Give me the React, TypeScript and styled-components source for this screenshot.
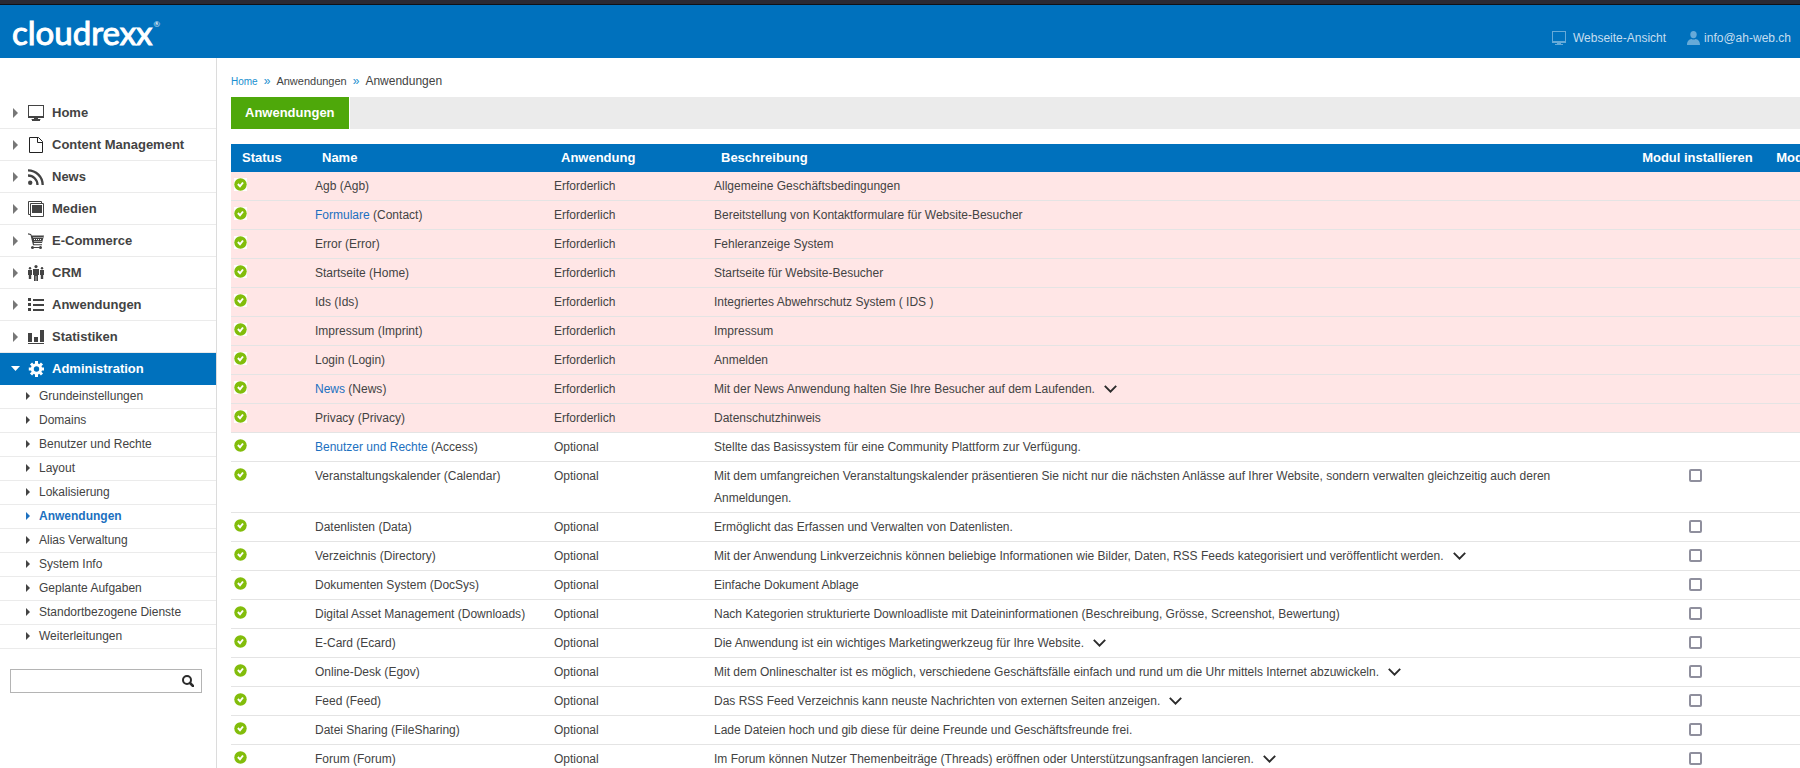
import React, { useState } from "react";
import styled, { createGlobalStyle, css } from "styled-components";

const blue = "#0071bd";
const linkBlue = "#1c70c0";
const ink = "#434343";
const line = "#e4e4e4";

const GlobalStyle = createGlobalStyle`
  * { box-sizing: border-box; }
  body {
    margin: 0;
    background: #fff;
    color: ${ink};
    font: 12px/22px "Liberation Sans", Arial, sans-serif;
  }
  a { color: inherit; text-decoration: none; }
  ul, ol { list-style: none; margin: 0; padding: 0; }
  svg { display: block; flex: none; }
`;

const Page = styled.div`
  display: flex;
  flex-direction: column;
  height: 100vh;
  overflow: hidden;
`;

const Header = styled.header`
  display: flex;
  flex: none;
  justify-content: space-between;
  height: 58px;
  padding: 0 9px 0 12px;
  border-top: 4px solid #2b2a33;
  background: ${blue};
  box-shadow: inset 0 1px #111116;
`;

const Logo = styled.a`
  display: flex;
  align-items: flex-start;
  gap: 1px;
  padding-top: 12px;
  color: #fff;
  font: 33px/32px Lato, sans-serif;
  -webkit-text-stroke: 1px #fff;
`;

const LogoMark = styled.sup`
  padding-top: 4px;
  font-size: 8px;
  line-height: 8px;
  -webkit-text-stroke: 0;
`;

const HeaderLinks = styled.nav`
  display: flex;
  align-items: flex-end;
  gap: 21px;
  padding-bottom: 9px;
`;

const HeaderLink = styled.a<{ $gap: number }>`
  display: flex;
  align-items: center;
  gap: ${(p) => p.$gap}px;
  color: #c5def0;
  svg { color: #66aad8; }
`;

const Body = styled.div`
  display: flex;
  flex: 1;
  min-height: 0;
`;

const Sidebar = styled.aside`
  flex: none;
  width: 217px;
  padding-top: 39px;
  border-right: 1px solid #dcdcdc;
`;

const NavLink = styled.a<{ $active?: boolean }>`
  display: flex;
  align-items: center;
  gap: 8px;
  height: 32px;
  padding-left: 11px;
  border-bottom: 1px solid #ebebeb;
  font-size: 13px;
  font-weight: bold;
  ${(p) => p.$active && css`
    border-color: ${blue};
    background: ${blue};
    color: #fff;
  `}
`;

const SubLink = styled.a<{ $active?: boolean }>`
  display: flex;
  align-items: center;
  gap: 9px;
  height: 24px;
  padding: 0 0 2px 26px;
  border-bottom: 1px solid #ebebeb;
  ${(p) => p.$active && css`
    color: ${linkBlue};
    font-weight: bold;
  `}
`;

const Search = styled.form`
  display: flex;
  height: 24px;
  margin: 20px 14px 0 10px;
  border: 1px solid #b4b4b4;
`;

const SearchInput = styled.input`
  flex: 1;
  min-width: 0;
  padding: 0 6px;
  border: 0;
  outline: 0;
  background: none;
  color: ${ink};
  font: inherit;
`;

const PlainButton = styled.button`
  padding: 0;
  border: 0;
  background: none;
  color: #2b2b2b;
  cursor: pointer;
`;

const SearchButton = styled(PlainButton)`
  padding: 0 7px;
`;

const Main = styled.main`
  flex: 1;
  min-width: 0;
  padding-left: 14px;
  overflow: hidden;
`;

const Crumbs = styled.ol`
  display: flex;
  align-items: baseline;
  gap: 6px;
  padding: 12px 0 4px;
`;

const Crumb = styled.li<{ $size: number; $link?: boolean }>`
  font-size: ${(p) => p.$size}px;
  color: ${(p) => (p.$link ? "#1a8fd0" : ink)};
`;

const Tabs = styled.nav`
  display: flex;
  height: 32px;
  background: #ebebeb;
`;

const Tab = styled.a`
  padding: 0 14px;
  border-right: 1px solid #fff;
  background: #4ea80a;
  color: #fff;
  font-size: 13px;
  font-weight: bold;
  line-height: 32px;
`;

const Table = styled.table`
  width: 106%;
  margin-top: 15px;
  border-spacing: 0;
  table-layout: fixed;
`;

const Col = styled.col<{ $width?: number }>`
  width: ${(p) => (p.$width ? `${p.$width}px` : "auto")};
`;

const Th = styled.th`
  height: 28px;
  padding: 0 7px 0 14px;
  background: ${blue};
  color: #fff;
  font-size: 13px;
  text-align: left;
  white-space: nowrap;
  &:first-child { padding-left: 11px; }
`;

const Row = styled.tr<{ $required: boolean }>`
  background: ${(p) => (p.$required ? "#ffe6e6" : "#fff")};
`;

const Td = styled.td`
  padding: 3px 7px;
  border-bottom: 1px solid ${line};
  vertical-align: top;
`;

const StatusTd = styled(Td)`
  padding-left: 3px;
`;

const NameLink = styled.a`
  color: ${linkBlue};
`;

const More = styled(PlainButton)`
  display: inline-block;
  margin-left: 9px;
`;

const StatusBadge = styled.span`
  display: block;
  width: 13px;
  margin-top: 3px;
  background: #fff;
`;

const Check = styled.input`
  display: block;
  appearance: none;
  width: 13px;
  height: 13px;
  margin: 4px auto;
  border: 2px solid #8f8f9d;
  border-radius: 2px;
  background: #fff;
  &:checked { background: ${blue}; }
`;

const Svg = ({ w = 16, h = 16, children }: { w?: number; h?: number; children: React.ReactNode }) => (
  <svg width={w} height={h} viewBox={`0 0 ${w} ${h}`} fill="currentColor" aria-hidden="true">
    {children}
  </svg>
);

const ScreenIcon = () => (
  <Svg>
    <path fillRule="evenodd" d="M0 0H16V13H0ZM1 1V11H15V1Z" />
    <path d="M6 13h4v1h2v2H4v-2h2z" />
    <path d="M3 14h3v1H3zM10 14h3v1h-3z" opacity=".4" />
  </Svg>
);

const SmallScreenIcon = () => (
  <Svg w={14} h={14}>
    <path fillRule="evenodd" d="M0 0H14V12H0ZM1 1V10H13V1Z" />
    <path d="M5 12h4v1h2v1H3v-1h2z" />
  </Svg>
);

const UserIcon = () => (
  <Svg w={13} h={14}>
    <ellipse cx="6.5" cy="3.6" rx="3.2" ry="3.6" />
    <path d="M0 14c0-4 2-5.500 4.500-6 1 .8 3 .8 4 0 2.500.5 4.500 2 4.500 6z" />
  </Svg>
);

const PageIcon = () => (
  <Svg>
    <path d="M1.500.5H10.500L14.500 4.500V15.500H1.500Z" fill="none" stroke="#222" />
    <path d="M9.500.5V5.500H14.500" fill="none" stroke="#222" />
  </Svg>
);

const FeedIcon = () => (
  <Svg>
    <circle cx="2.2" cy="13.8" r="2.2" />
    <path d="M0 6.500A9.500 9.500 0 0 1 9.500 16M0 1.300A14.700 14.700 0 0 1 14.700 16" fill="none" stroke="currentColor" strokeWidth="2.3" />
  </Svg>
);

const MediaIcon = () => (
  <Svg>
    <path d="M2 13.500H.5V.5H13.500V2M2.500 2.500H15.500V15.500H2.500Z" fill="none" stroke="currentColor" />
    <path d="M4 4h10v8H4z" />
  </Svg>
);

const CartIcon = () => (
  <Svg>
    <path d="M0 .3 3 1l.8 1.500H16L14 10H5.600l.6 1.300H14v1H5L2.500 2 0 1.500z" />
    <path d="M5.500 4.500h9M6 6.500h8M6.500 8.500h7" stroke="#fff" strokeDasharray="1 1" fill="none" />
    <path d="M3.500 14.500H13" stroke="currentColor" />
    <circle cx="4.5" cy="14.5" r="1.5" />
    <circle cx="12.5" cy="14.5" r="1.5" />
  </Svg>
);

const PeopleIcon = () => (
  <Svg>
    <circle cx="8" cy="1.6" r="1.6" />
    <path d="M5 4h6v6h-1v6H8.300v-5h-.6v5H6v-6H5z" />
    <circle cx="2" cy="3.2" r="1.2" />
    <path d="M0 5h4v5H3.200v4H.8v-4H0z" />
    <circle cx="14" cy="3.2" r="1.2" />
    <path d="M12 5h4v5h-.8v4h-2.400v-4H12z" />
  </Svg>
);

const ListIcon = () => (
  <Svg>
    <path d="M5 2h11v2H5zM5 7h11v2H5zM5 12h11v2H5z" />
    <path d="M0 1h3v3H0zM0 6h3v3H0zM0 11h3v3H0z" />
  </Svg>
);

const ChartIcon = () => (
  <Svg>
    <path d="M0 4h4v9H0zM6 8h4v5H6zM12 1h4v12h-4zM0 14h16v1H0z" />
  </Svg>
);

const GearIcon = () => (
  <Svg>
    <circle cx="8.5" cy="8" r="4.2" fill="none" stroke="currentColor" strokeWidth="3" />
    <path
      d="M8.500 0V3M8.500 13V16M.8 8h3M13.200 8h3M3 2.500l2 2M12 11.500l2 2M3 13.500l2-2M12 4.500l2-2"
      stroke="currentColor"
      strokeWidth="3"
    />
  </Svg>
);

const ArrowRight = () => (
  <Svg w={9} h={10}>
    <path d="M2 0 7 5 2 10z" fill="#777" />
  </Svg>
);

const ArrowDown = () => (
  <Svg w={9} h={5}>
    <path d="M0 0h9L4.500 5z" />
  </Svg>
);

const SmallArrow = () => (
  <Svg w={4} h={8}>
    <path d="M0 0 4 4 0 8z" />
  </Svg>
);

const SearchIcon = () => (
  <Svg w={12} h={12}>
    <circle cx="5" cy="5" r="4" fill="none" stroke="currentColor" strokeWidth="2" />
    <path d="M8 8 11 11" stroke="currentColor" strokeWidth="2.5" strokeLinecap="round" />
  </Svg>
);

const ChevronIcon = () => (
  <Svg w={13} h={8}>
    <path d="M.8.8 6.500 6.600 12.200.8" fill="none" stroke="currentColor" strokeWidth="1.9" />
  </Svg>
);

const OkIcon = () => (
  <Svg w={13} h={13}>
    <circle cx="6.5" cy="6.5" r="6.2" fill="#82bd0b" />
    <path d="M3.900 6 6 8.300 9 4.500" fill="none" stroke="#fff" strokeWidth="2" />
  </Svg>
);

const sections = [
  { label: "Home", Icon: ScreenIcon },
  { label: "Content Management", Icon: PageIcon },
  { label: "News", Icon: FeedIcon },
  { label: "Medien", Icon: MediaIcon },
  { label: "E-Commerce", Icon: CartIcon },
  { label: "CRM", Icon: PeopleIcon },
  { label: "Anwendungen", Icon: ListIcon },
  { label: "Statistiken", Icon: ChartIcon },
  { label: "Administration", Icon: GearIcon, active: true },
];

const subItems = [
  "Grundeinstellungen",
  "Domains",
  "Benutzer und Rechte",
  "Layout",
  "Lokalisierung",
  "Anwendungen",
  "Alias Verwaltung",
  "System Info",
  "Geplante Aufgaben",
  "Standortbezogene Dienste",
  "Weiterleitungen",
];

type Module = {
  name: string;
  key: string;
  text: string;
  required?: boolean;
  link?: boolean;
  more?: boolean;
  fixed?: boolean;
};

const modules: Module[] = [
  { name: "Agb", key: "Agb", text: "Allgemeine Geschäftsbedingungen", required: true },
  { name: "Formulare", key: "Contact", text: "Bereitstellung von Kontaktformulare für Website-Besucher", required: true, link: true },
  { name: "Error", key: "Error", text: "Fehleranzeige System", required: true },
  { name: "Startseite", key: "Home", text: "Startseite für Website-Besucher", required: true },
  { name: "Ids", key: "Ids", text: "Integriertes Abwehrschutz System ( IDS )", required: true },
  { name: "Impressum", key: "Imprint", text: "Impressum", required: true },
  { name: "Login", key: "Login", text: "Anmelden", required: true },
  { name: "News", key: "News", text: "Mit der News Anwendung halten Sie Ihre Besucher auf dem Laufenden.", required: true, link: true, more: true },
  { name: "Privacy", key: "Privacy", text: "Datenschutzhinweis", required: true },
  { name: "Benutzer und Rechte", key: "Access", text: "Stellte das Basissystem für eine Community Plattform zur Verfügung.", link: true, fixed: true },
  { name: "Veranstaltungskalender", key: "Calendar", text: "Mit dem umfangreichen Veranstaltungskalender präsentieren Sie nicht nur die nächsten Anlässe auf Ihrer Website, sondern verwalten gleichzeitig auch deren Anmeldungen." },
  { name: "Datenlisten", key: "Data", text: "Ermöglicht das Erfassen und Verwalten von Datenlisten." },
  { name: "Verzeichnis", key: "Directory", text: "Mit der Anwendung Linkverzeichnis können beliebige Informationen wie Bilder, Daten, RSS Feeds kategorisiert und veröffentlicht werden.", more: true },
  { name: "Dokumenten System", key: "DocSys", text: "Einfache Dokument Ablage" },
  { name: "Digital Asset Management", key: "Downloads", text: "Nach Kategorien strukturierte Downloadliste mit Dateininformationen (Beschreibung, Grösse, Screenshot, Bewertung)" },
  { name: "E-Card", key: "Ecard", text: "Die Anwendung ist ein wichtiges Marketingwerkzeug für Ihre Website.", more: true },
  { name: "Online-Desk", key: "Egov", text: "Mit dem Onlineschalter ist es möglich, verschiedene Geschäftsfälle einfach und rund um die Uhr mittels Internet abzuwickeln.", more: true },
  { name: "Feed", key: "Feed", text: "Das RSS Feed Verzeichnis kann neuste Nachrichten von externen Seiten anzeigen.", more: true },
  { name: "Datei Sharing", key: "FileSharing", text: "Lade Dateien hoch und gib diese für deine Freunde und Geschäftsfreunde frei." },
  { name: "Forum", key: "Forum", text: "Im Forum können Nutzer Themenbeiträge (Threads) eröffnen oder Unterstützungsanfragen lancieren.", more: true },
];

function ModuleRow({ module: m }: { module: Module }) {
  const [checked, setChecked] = useState(false);
  return (
    <Row $required={!!m.required}>
      <StatusTd>
        <StatusBadge role="img" aria-label="Aktiv"><OkIcon /></StatusBadge>
      </StatusTd>
      <Td>{m.link ? <NameLink href="#">{m.name}</NameLink> : m.name} ({m.key})</Td>
      <Td>{m.required ? "Erforderlich" : "Optional"}</Td>
      <Td>
        {m.text}
        {m.more && <More type="button" aria-label="Mehr anzeigen"><ChevronIcon /></More>}
      </Td>
      <Td>
        {!m.required && !m.fixed && (
          <Check
            type="checkbox"
            aria-label={`${m.name} installieren`}
            checked={checked}
            onChange={(e) => setChecked(e.target.checked)}
          />
        )}
      </Td>
      <Td />
    </Row>
  );
}

export default function App() {
  return (
    <Page>
      <GlobalStyle />
      <Header>
        <Logo href="#">cloudrexx<LogoMark>®</LogoMark></Logo>
        <HeaderLinks>
          <HeaderLink href="#" $gap={7}><SmallScreenIcon />Webseite-Ansicht</HeaderLink>
          <HeaderLink href="#" $gap={4}><UserIcon />info@ah-web.ch</HeaderLink>
        </HeaderLinks>
      </Header>
      <Body>
        <Sidebar>
          <ul>
            {sections.map(({ label, Icon, active }) => (
              <li key={label}>
                <NavLink href="#" $active={active}>
                  {active ? <ArrowDown /> : <ArrowRight />}
                  <Icon />
                  {label}
                </NavLink>
              </li>
            ))}
          </ul>
          <ul>
            {subItems.map((label) => (
              <li key={label}>
                <SubLink href="#" $active={label === "Anwendungen"}><SmallArrow />{label}</SubLink>
              </li>
            ))}
          </ul>
          <Search role="search" onSubmit={(e) => e.preventDefault()}>
            <SearchInput type="text" aria-label="Suche" />
            <SearchButton type="submit" aria-label="Suchen"><SearchIcon /></SearchButton>
          </Search>
        </Sidebar>
        <Main>
          <Crumbs>
            <Crumb $size={10} $link><a href="#">Home</a></Crumb>
            <Crumb $size={12} $link>»</Crumb>
            <Crumb $size={11}>Anwendungen</Crumb>
            <Crumb $size={12} $link>»</Crumb>
            <Crumb $size={12}>Anwendungen</Crumb>
          </Crumbs>
          <Tabs><Tab href="#">Anwendungen</Tab></Tabs>
          <Table>
            <colgroup>
              <Col $width={77} />
              <Col $width={239} />
              <Col $width={160} />
              <Col />
              <Col $width={134} />
              <Col $width={132} />
            </colgroup>
            <thead>
              <tr>
                <Th>Status</Th>
                <Th>Name</Th>
                <Th>Anwendung</Th>
                <Th>Beschreibung</Th>
                <Th>Modul installieren</Th>
                <Th>Modul aktivieren</Th>
              </tr>
            </thead>
            <tbody>
              {modules.map((m) => <ModuleRow key={m.key} module={m} />)}
            </tbody>
          </Table>
        </Main>
      </Body>
    </Page>
  );
}
